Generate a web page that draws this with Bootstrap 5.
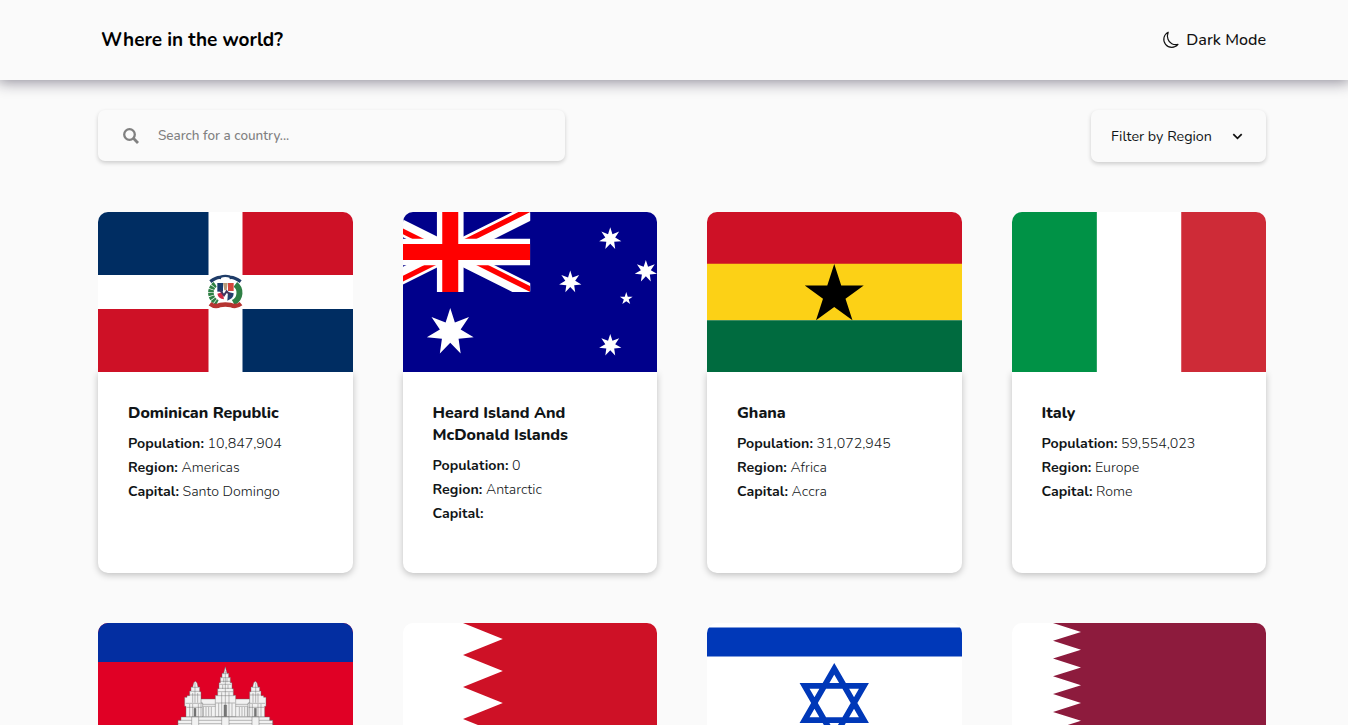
<!DOCTYPE html>
<html lang="en">
<head>
<meta charset="utf-8">
<meta name="viewport" content="width=device-width, initial-scale=1">
<title>Where in the world?</title>
<link href="https://cdn.jsdelivr.net/npm/bootstrap@5.3.0/dist/css/bootstrap.min.css" rel="stylesheet">
<style>
  body { font-family: Nunito, Lato, "Open Sans", sans-serif; background: #fafafa; color: #111517; }
  .edge { padding-left: 98px; padding-right: 82px; }
  .topbar { height: 80px; background: #fafafa; box-shadow: 0 0 14px 2px rgba(20, 15, 40, .48); }
  .brand { font-size: 19px; font-weight: 700; color: #000; margin-left: 3px; }
  .mode { font-size: 16.1px; font-weight: 500; gap: 7px; color: #111; }
  .tools { padding-top: 30px; padding-bottom: 50px; }
  .field { border-radius: 7px; background: #fafafa; box-shadow: 0 2px 4px rgba(0, 0, 0, .18); }
  .finder { width: 467px; height: 51px; padding-left: 25px; gap: 19px; color: #808080; font-size: 13.5px; font-weight: 500; }
  .finder span { padding-top: 2px; }
  .region { width: 175px; height: 52px; padding: 0 23px 0 20px; font-size: 14.3px; }
  .region span { padding-top: 2px; }
  .countries { display: grid; grid-template-columns: repeat(4, 1fr); gap: 50px; }
  .country { height: 361px; }
  .flag { display: block; width: 100%; height: 160px; border-radius: 10px 10px 0 0; }
  .facts { height: 201px; padding: 30px 30px 0; background: #fff; border-radius: 0 0 10px 10px; box-shadow: 0 2px 7px rgba(0, 0, 0, .24); font-size: 14.2px; line-height: 24px; font-weight: 300; }
  .facts h2 { font-size: 16px; line-height: 22px; font-weight: 800; margin: 0 0 8px; }
  .facts p { margin: 0; }
  .facts b { font-weight: 700; letter-spacing: .06px; }
</style>
</head>
<body class="vh-100 overflow-hidden">
<svg width="0" height="0" class="position-absolute" aria-hidden="true">
  <symbol id="star7" viewBox="-100 -100 200 200" overflow="visible"><path d="M0-100 19.3-40 78.2-62.4 43.3-9.9 97.5 22.3 34.7 27.7 43.4 90.1 0 44.4-43.4 90.1-34.7 27.7-97.5 22.3-43.3-9.9-78.2-62.4-19.3-40z"/></symbol>
  <symbol id="star5" viewBox="-100 -100 200 200" overflow="visible"><path d="M0-100 22.5-30.9H95.1L36.3 11.8 58.8 80.9 0 38.2-58.8 80.9-36.3 11.8-95.1-30.9H-22.5z"/></symbol>
</svg>

<header class="topbar edge d-flex align-items-center justify-content-between position-relative">
  <h1 class="brand mb-0">Where in the world?</h1>
  <div class="mode d-flex align-items-center">
    <svg width="17" height="18" viewBox="0 0 17 18" fill="none" stroke="#111" stroke-width="1.15" stroke-linejoin="round"><path d="M6.2 1.2A8 8 0 1 0 16 13.4C11.500 14.500 7.300 12.300 6 8.300 5.200 5.800 5.300 3.300 6.200 1.200z"/></svg>
    <span>Dark Mode</span>
  </div>
</header>

<main class="edge">
  <div class="tools d-flex justify-content-between align-items-start">
    <div class="field finder d-flex align-items-center">
      <svg width="16" height="16" viewBox="0 0 16 16" fill="none" stroke="#808080"><circle cx="6.500" cy="6.500" r="5.300" stroke-width="2.300"/><path d="M10.600 10.600 15 15" stroke-width="2.800"/></svg>
      <span>Search for a country...</span>
    </div>
    <div class="field region d-flex align-items-center justify-content-between">
      <span>Filter by Region</span>
      <svg width="11" height="7" viewBox="0 0 11 7" fill="none" stroke="#111" stroke-width="1.700"><path d="M1.300 1.200 5.500 5.400 9.700 1.200"/></svg>
    </div>
  </div>

  <div class="countries">
    <article class="country">
      <svg class="flag" viewBox="0 0 254.500 160" preserveAspectRatio="none">
        <path fill="#fff" d="M0 0h255v160H0z"/>
        <path fill="#002d62" d="M0 0h110.500v63H0zM144.500 97h110.500V160h-110.500z"/>
        <path fill="#ce1126" d="M144.500 0h110.500v63h-110.500zM0 97h110.500V160H0z"/>
        <g transform="translate(-8 -12) scale(.33333)" fill="none">
          <path d="M376 253C357 266 358 296 382 308" stroke="#2f8045" stroke-width="17" stroke-dasharray="8 2"/>
          <path d="M436 253C454 266 453 296 430 308" stroke="#2f8045" stroke-width="18"/>
          <path d="M361 245Q382 229 394 233M418 233Q430 229 452 245" stroke="#1f3c68" stroke-width="10"/>
          <path d="M392 230Q406 225 420 230" stroke="#1f3c68" stroke-width="7"/>
          <path d="M360 311Q376 323 390 315 406 312 422 315 438 323 453 311" stroke="#b53431" stroke-width="13"/>
          <path d="M380 247h52v34c0 14-12 18-26 25-14-7-26-11-26-25z" fill="#fff"/>
          <path d="M382 249h17v26h-17z" fill="#183a6b"/><path d="M414 249h17v24h-17z" fill="#d5453c"/>
          <path d="M382 281l16-5 4 22q-18-3-20-17z" fill="#d12945"/><path d="M414 276l17 4q0 16-19 22z" fill="#25406f"/>
          <path d="M399 249h14l-3 22h-7z" fill="#b89a78"/>
          <path d="m390 270 12 16 8-12 12 12" stroke="#44345f" stroke-width="6"/>
        </g>
      </svg>
      <div class="facts"><h2>Dominican Republic</h2>
        <p><b>Population:</b> 10,847,904</p><p><b>Region:</b> Americas</p><p><b>Capital:</b> Santo Domingo</p></div>
    </article>

    <article class="country">
      <svg class="flag" viewBox="0 0 320 160" preserveAspectRatio="xMidYMid slice">
        <path fill="#00008b" d="M0 0h320v160H0z"/>
        <svg width="160" height="80" viewBox="0 0 60 30">
          <clipPath id="quarters"><path d="M30 15h30v15zv15H0zH0V0zV0h30z"/></clipPath>
          <path d="M0 0 60 30M60 0 0 30" stroke="#fff" stroke-width="6"/>
          <path d="M0 0 60 30M60 0 0 30" stroke="#f00" stroke-width="4" clip-path="url(#quarters)"/>
          <path d="M30 0v30M0 15h60" stroke="#fff" stroke-width="10"/>
          <path d="M30 0v30M0 15h60" stroke="#f00" stroke-width="6"/>
        </svg>
        <g fill="#fff">
          <use href="#star7" x="56" y="96" width="48" height="48"/>
          <use href="#star7" x="228.600" y="15.300" width="22.800" height="22.800"/>
          <use href="#star7" x="188.600" y="58.600" width="22.800" height="22.800"/>
          <use href="#star7" x="264.200" y="47.900" width="22.800" height="22.800"/>
          <use href="#star7" x="228.600" y="121.900" width="22.800" height="22.800"/>
          <use href="#star5" x="249.300" y="80" width="13.400" height="13.400"/>
        </g>
      </svg>
      <div class="facts"><h2>Heard Island And McDonald Islands</h2>
        <p><b>Population:</b> 0</p><p><b>Region:</b> Antarctic</p><p><b>Capital:</b></p></div>
    </article>

    <article class="country">
      <svg class="flag" viewBox="0 0 254.500 169.670" preserveAspectRatio="xMidYMid slice">
        <path fill="#ce1126" d="M0 0h255v57H0z"/><path fill="#fcd116" d="M0 56.560h255v56.600H0z"/><path fill="#006b3f" d="M0 113.110h255V170H0z"/>
        <use href="#star5" x="96.250" y="56.900" width="62" height="62"/>
      </svg>
      <div class="facts"><h2>Ghana</h2>
        <p><b>Population:</b> 31,072,945</p><p><b>Region:</b> Africa</p><p><b>Capital:</b> Accra</p></div>
    </article>

    <article class="country">
      <svg class="flag" viewBox="0 0 3 2" preserveAspectRatio="xMidYMid slice">
        <path fill="#fff" d="M0 0h3v2H0z"/><path fill="#009246" d="M0 0h1v2H0z"/><path fill="#ce2b37" d="M1.995 0H3v2H1.995z"/>
      </svg>
      <div class="facts"><h2>Italy</h2>
        <p><b>Population:</b> 59,554,023</p><p><b>Region:</b> Europe</p><p><b>Capital:</b> Rome</p></div>
    </article>

    <article class="country">
      <svg class="flag" viewBox="0 0 254.500 160" preserveAspectRatio="none">
        <path fill="#e00025" d="M0 0h255v160H0z"/><path fill="#032ea1" d="M0 0h255v39H0zM0 121h255v39H0z"/>
        <g transform="translate(-8 -8) scale(.33333)" stroke="#666" stroke-width="1.300" fill="#f2f2f2">
          <path d="M332 252h148v54H332z"/>
          <path d="M332 268h148M332 274h148M340 276v28m8-28v28m8-28v28m8-28v28m84-28v28m8-28v28m8-28v28m8-28v28"/>
          <g id="tower">
            <path d="M284 247h7v-5h8v-14h4v-12h5l3-13 5-4 5 4 3 13h5v14h4v34h5v42h-50v-32h-4z"/>
            <path d="M302 229h27M304 217h22M300 240h32M287 265h50M290 277h46M299 267v38M308 267v38M325 267v38M333 267v38M308 234v29M315 203v60M323 234v29"/>
          </g>
          <use href="#tower" transform="translate(812) scale(-1 1)"/>
          <path d="M376 305v-64h7v-20h4v-18h4v-16h5v-12h5l5-20 5 20h5v12h5v16h5v18h4v20h7v64z"/>
          <path d="M397 176h18M393 188h26M390 199h32M388 208h36M385 220h42M383 230h46M379 242h54M377 264h58M386 265v40M395 232v73M406 168v137M417 232v73M426 265v40M401 190v12M411 190v12M398 210v12M414 210v12"/>
          <path d="M273 306h266v10h9v18H264v-18h9z"/>
          <path d="M264 316h284M260 326h292"/>
          <path d="M305 306h21v30h-21zM395 306h22v30h-22zM486 306h21v30h-21z"/>
          <path fill="#777" d="M312 280h6v24h-6zM402 270h8v34h-8zM493 280h6v24h-6z"/>
        </g>
      </svg>
      <div class="facts"></div>
    </article>

    <article class="country">
      <svg class="flag" viewBox="0 0 254.500 160" preserveAspectRatio="none">
        <path fill="#fff" d="M0 0h255v160H0z"/>
        <path fill="#ce1126" d="M255 0H60L99.800 16 60 32 99.800 48 60 64 99.800 80 60 96 99.800 112 60 128 99.800 144 60 160H255z"/>
      </svg>
      <div class="facts"></div>
    </article>

    <article class="country">
      <svg class="flag" viewBox="0 0 254.500 160" preserveAspectRatio="none">
        <path fill="#fff" d="M0 0h255v160H0z"/>
        <path fill="#0038b8" d="M2 4.400h251l2 2v27H0v-27zM0 126.600h255v29H0z"/>
        <path fill="none" stroke="#0038b8" stroke-width="5.800" d="M127.250 45.800 156.900 97.100H97.600zM127.250 114.200 97.600 62.900h59.300z"/>
      </svg>
      <div class="facts"></div>
    </article>

    <article class="country">
      <svg class="flag" viewBox="0 0 254.500 160" preserveAspectRatio="none">
        <path fill="#fff" d="M0 0h255v160H0z"/>
        <path fill="#8d1b3d" d="M255 0H41L69 8.890 41 17.780 69 26.670 41 35.560 69 44.440 41 53.330 69 62.220 41 71.110 69 80 41 88.890 69 97.780 41 106.670 69 115.560 41 124.440 69 133.330 41 142.220 69 151.110 41 160H255z"/>
      </svg>
      <div class="facts"></div>
    </article>
  </div>
</main>
<script src="https://cdn.jsdelivr.net/npm/bootstrap@5.3.0/dist/js/bootstrap.bundle.min.js"></script>
</body>
</html>
